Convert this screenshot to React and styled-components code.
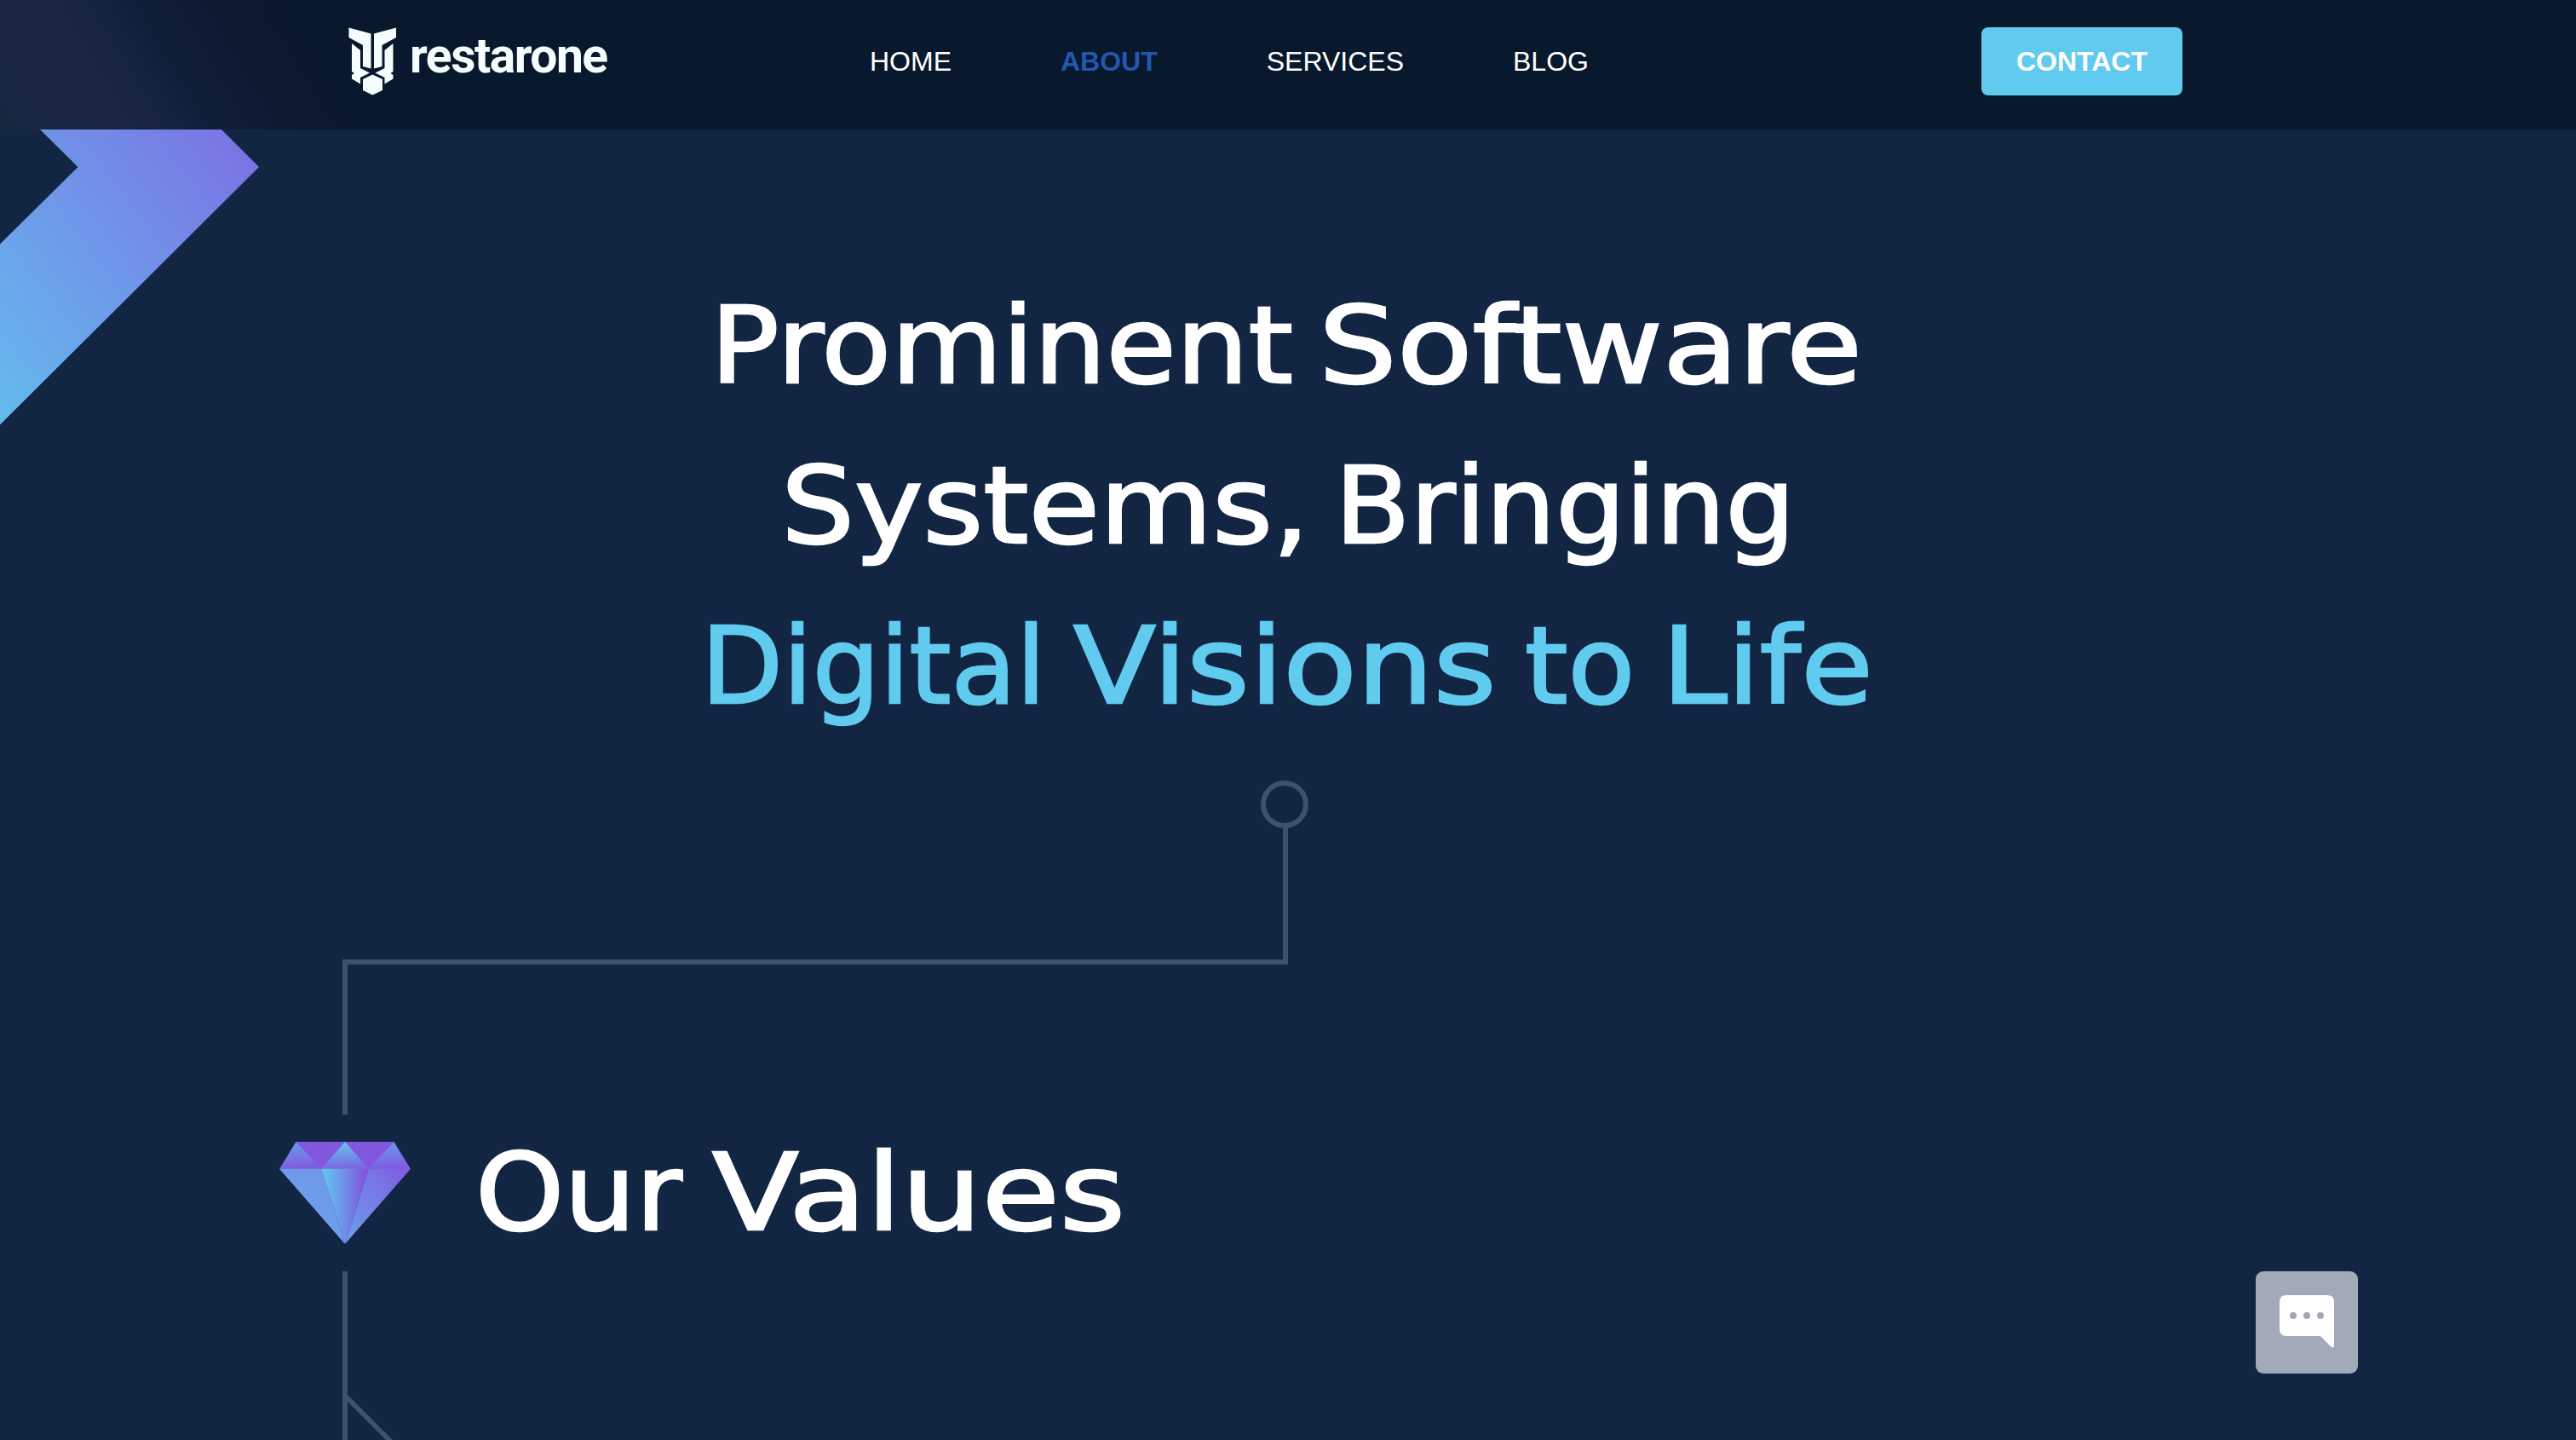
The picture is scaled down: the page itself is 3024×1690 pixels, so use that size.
import React from "react";
import styled, { createGlobalStyle } from "styled-components";

const Global = createGlobalStyle`
  *{box-sizing:border-box}
  html,body{margin:0;height:1690px;overflow:hidden;background:#122644}
`;
const Page = styled.div`
  position: relative;
  width: 3024px;
  height: 1690px;
  overflow: hidden;
  background: #122644;
  color: #fff;
  font-family: "Liberation Sans", Helvetica, sans-serif;
`;
const Header = styled.header`
  height: 152px;
  padding: 32px 462px 40px 409px;
  display: flex;
  align-items: center;
  background: linear-gradient(59deg, #16263f 0px, #1a2846 70px, #1a2645 116px, #152440 168px, #101f39 211px, #0c1a30 297px, #08182d 378px) 0 0 / 440px 152px no-repeat #08182d;
`;
const Brand = styled.a`
  display: flex;
  align-items: center;
  width: 612px;
  height: 80px;
  color: #f5fdff;
`;
const BrandMark = styled.svg`
  width: 57px;
  height: 80px;
  flex: none;
`;
const BrandName = styled.span`
  margin-left: 15px;
  font: 700 57px/80px Roboto, sans-serif;
  letter-spacing: -1.5px;
  padding-bottom: 12px;
`;
const Nav = styled.nav`
  display: flex;
  gap: 128px;
`;
const NavLink = styled.a`
  font-size: 32px;
  line-height: 80px;
  font-weight: ${(p) => (p.$active ? 700 : 400)};
  color: ${(p) => (p.$active ? "#2357b0" : "#fff")};
`;
const Contact = styled.a`
  margin-left: auto;
  width: 236px;
  height: 80px;
  border-radius: 8px;
  background: #60cbee;
  font-size: 32px;
  font-weight: 700;
  line-height: 80px;
  text-align: center;
`;
const Chevron = styled.svg`
  position: absolute;
  left: 0;
  top: 152px;
  width: 306px;
  height: 350px;
`;
const Hero = styled.h1`
  margin: 160px 0 0;
  height: 604px;
  font: 400 125px/188px "DejaVu Sans", sans-serif;
`;
const Line = styled.span`
  display: flex;
  padding-left: ${(p) => p.$start}px;
  color: ${(p) => p.$color || "#fff"};
`;
const Word = styled.span`
  flex: none;
  width: ${(p) => p.$width}px;
  white-space: nowrap;
  transform: scaleX(${(p) => p.$stretch});
  transform-origin: 0 50%;
  -webkit-text-stroke: 2.5px currentColor;
`;
const Connector = styled.svg`
  display: block;
  width: 1112px;
  height: 392px;
  margin-left: 402px;
  overflow: visible;
`;
const Section = styled.section`
  display: flex;
  align-items: center;
  height: 184px;
  padding-left: 328px;
`;
const Diamond = styled.svg`
  width: 154px;
  height: 120px;
  flex: none;
`;
const SectionTitle = styled.h2`
  display: flex;
  margin: 0 0 0 76px;
  font: 400 125px/184px "DejaVu Sans", sans-serif;
`;
const Branch = styled.svg`
  display: block;
  width: 60px;
  height: 198px;
  margin-left: 402px;
`;
const Chat = styled.button`
  position: absolute;
  left: 2648px;
  top: 1492px;
  width: 120px;
  height: 120px;
  padding: 0;
  border: 0;
  border-radius: 9px;
  background: #a2a9b7;
`;
const ChatIcon = styled.svg`
  display: block;
  width: 120px;
  height: 120px;
`;

const links = ["HOME", "ABOUT", "SERVICES", "BLOG"];

export default function App() {
  return (
    <Page>
      <Global />
      <Header>
        <Brand>
          <BrandMark viewBox="409 32 57 80" fill="#f5fdff">
            <path d="M409.500 32.500L435.500 39.500V80.500L426 78V53L409.500 44Z" />
            <path d="M465 32.500L439 39.500V80.500L448.500 78V53L465 44Z" />
            <path d="M413 51L423 59V80L434 85.500L423 91V98.500L413 92.500V88L416 86L413 84Z" />
            <path d="M461.500 51L451.500 59V80L440.500 85.500L451.500 91V98.500L461.500 92.500V88L458.500 86L461.500 84Z" />
            <path d="M437.300 87.500L449 93V106L437.300 111.500L426 106V93Z" />
          </BrandMark>
          <BrandName>restarone</BrandName>
        </Brand>
        <Nav>
          {links.map((l) => (
            <NavLink key={l} $active={l === "ABOUT"}>{l}</NavLink>
          ))}
        </Nav>
        <Contact>CONTACT</Contact>
      </Header>
      <Chevron viewBox="0 152 306 350">
        <defs>
          <linearGradient id="chev" gradientUnits="userSpaceOnUse" x1="-15" y1="498" x2="355" y2="215">
            <stop stopColor="#64bdec" />
            <stop offset=".5" stopColor="#6f96e9" />
            <stop offset="1" stopColor="#7b70e3" />
          </linearGradient>
        </defs>
        <path fill="url(#chev)" d="M0 286.500L91.500 196L47 152H260L304 196L0 498.500Z" />
      </Chevron>
      <Hero>
        <Line $start={834}>
          <Word $width={714} $stretch={1.07}>Prominent</Word>
          <Word $width={700} $stretch={1.158}>Software</Word>
        </Line>
        <Line $start={917}>
          <Word $width={650} $stretch={1.086}>Systems,</Word>
          <Word $width={600} $stretch={1.032}>Bringing</Word>
        </Line>
        <Line $start={823} $color="#60cbee">
          <Word $width={437} $stretch={0.998}>Digital</Word>
          <Word $width={530} $stretch={1.133}>Visions</Word>
          <Word $width={161} $stretch={1.03}>to</Word>
          <Word $width={300} $stretch={1.1}>Life</Word>
        </Line>
      </Hero>
      <Connector viewBox="402 916 1112 392" fill="none" stroke="#3d526b" strokeWidth="6">
        <circle cx="1508" cy="944" r="25" />
        <path d="M1509 971V1129H405V1308" />
      </Connector>
      <Section>
        <Diamond viewBox="328 1340 154 120">
          <defs>
            <linearGradient id="down" x1="0" y1="0" x2=".15" y2="1">
              <stop stopColor="#6b9eeb" /><stop offset="1" stopColor="#7f5de1" />
            </linearGradient>
            <linearGradient id="top" x1="0" y1="0" x2=".1" y2="1">
              <stop stopColor="#60cbee" /><stop offset="1" stopColor="#7b68e2" />
            </linearGradient>
            <linearGradient id="mid">
              <stop stopColor="#60cbee" /><stop offset=".45" stopColor="#6f94e8" /><stop offset=".9" stopColor="#8157e0" />
            </linearGradient>
            <linearGradient id="left" x1="0" y1="1" x2=".5" y2="0">
              <stop stopColor="#6aa5ec" /><stop offset="1" stopColor="#6f98e9" />
            </linearGradient>
            <linearGradient id="right" x1="0" y1="1" x2="1" y2="0">
              <stop stopColor="#6c9fea" /><stop offset=".5" stopColor="#7480e6" /><stop offset="1" stopColor="#805ce1" />
            </linearGradient>
          </defs>
          <path fill="#8157e0" d="M347.500 1340H462.500L433 1372H377Z" />
          <path fill="url(#down)" d="M347.500 1340L378 1372H328Z" />
          <path fill="url(#down)" d="M462.500 1340L482 1372H432Z" />
          <path fill="url(#top)" d="M405 1340L433 1372H377Z" />
          <path fill="url(#left)" d="M328 1371.800H377.500L405 1460Z" />
          <path fill="url(#right)" d="M482 1371.800H432.500L405 1460Z" />
          <path fill="url(#mid)" d="M377.300 1371.800H432.700L405 1460Z" />
        </Diamond>
        <SectionTitle>
          <Word $width={278} $stretch={1.06}>Our</Word>
          <Word $width={500} $stretch={1.188}>Values</Word>
        </SectionTitle>
      </Section>
      <Branch viewBox="402 1492 60 198" fill="none" stroke="#3d526b">
        <path strokeWidth="6" d="M405 1492V1690" />
        <path strokeWidth="5.600" d="M406 1639L460 1693" />
      </Branch>
      <Chat aria-label="Open chat">
        <ChatIcon viewBox="0 0 120 120">
          <path fill="#fff" d="M36 28H84Q92 28 92 36V87Q92 91 89 89L77 77Q76 76 74 76H36Q28 76 28 68V36Q28 28 36 28Z" />
          <g fill="#a2a9b7"><circle cx="44" cy="52" r="4" /><circle cx="60" cy="52" r="4" /><circle cx="76" cy="52" r="4" /></g>
        </ChatIcon>
      </Chat>
    </Page>
  );
}
